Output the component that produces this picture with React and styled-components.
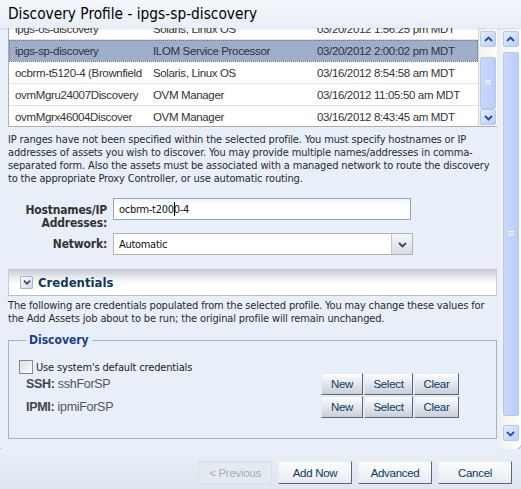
import React from "react";
import styled, { createGlobalStyle } from "styled-components";

const GlobalStyle = createGlobalStyle`
  html, body {
    margin: 0;
    padding: 0;
    background: #e9eff8;
  }
  #root {
    width: 521px;
    height: 489px;
    overflow: hidden;
  }
`;

const tahoma = `"DejaVu Sans Condensed", "Liberation Sans", sans-serif`;
const arial = `"Liberation Sans", Arial, sans-serif`;

const Page = styled.div`
  width: 521px;
  height: 489px;
  display: flex;
  flex-direction: column;
  background: #e9eff8;
  font-family: ${tahoma};
  color: #222;
`;

const TitleBar = styled.div`
  height: 28px;
  flex: none;
  display: flex;
  align-items: center;
  padding-left: 8px;
  font-size: 15.3px;
  color: #000;
  background: linear-gradient(#f4f7fb, #e8eef7);
  box-shadow: 0 1px 2px rgba(0, 0, 0, 0.12);
  position: relative;
  z-index: 1;
`;

const Panel = styled.div`
  height: 421px;
  flex: none;
  display: flex;
  background: #e9eff8;
  border-bottom-right-radius: 6px;
  border-bottom-left-radius: 3px;
  box-shadow: 0 2px 2px rgba(0, 0, 0, 0.25);
  overflow: hidden;
`;

const Scroller = styled.div`
  flex: 1;
  padding: 0 0 0 8px;
  overflow: hidden;
`;

const TableBox = styled.div`
  height: 98px;
  display: flex;
  border-left: 1px solid #a8b0bc;
  border-bottom: 1px solid #a8b0bc;
  background: #fff;
  margin-right: 3px;
`;

const Rows = styled.div`
  flex: 1;
  overflow: hidden;
  border-right: 1px solid #d8d8d8;
`;

const RowList = styled.div`
  margin-top: -10px;
`;

const Row = styled.div`
  height: 21px;
  display: grid;
  grid-template-columns: 138px 164px 1fr;
  align-items: center;
  font-family: ${arial};
  font-size: 11.5px;
  letter-spacing: -0.35px;
  color: #333;
  border-bottom: 1px solid #e2e2e2;
  background: ${(p) => (p.$selected ? "#9eadc9" : "#fff")};
  outline: ${(p) => (p.$selected ? "1px dotted #6a7890" : "none")};
  outline-offset: -1px;
  & > span {
    padding-left: 6px;
    white-space: nowrap;
    overflow: hidden;
  }
`;

const VScroll = styled.div`
  width: ${(p) => p.$w}px;
  flex: none;
  display: flex;
  flex-direction: column;
  align-items: center;
  padding: 3px 0 ${(p) => p.$pb}px;
  box-sizing: border-box;
  background: linear-gradient(90deg, #f3f2ea, #fdfdf9);
`;

const ScrollBtn = styled.div`
  width: 14px;
  height: 14px;
  flex: none;
  border: 1px solid #b4c8f0;
  border-radius: 2px;
  background: linear-gradient(135deg, #e6eeff, #b9cdf8);
  display: flex;
  align-items: center;
  justify-content: center;
`;

const Thumb = styled.div`
  width: 14px;
  flex: none;
  margin: ${(p) => p.$top}px 0 0;
  height: ${(p) => p.$h}px;
  border: 1px solid #b4c8f0;
  border-radius: 2px;
  background: linear-gradient(90deg, #c9d8fc, #bccdf7);
  display: flex;
  align-items: center;
  justify-content: center;
`;

const Spacer = styled.div`
  flex: 1;
`;

const Para = styled.p`
  margin: ${(p) => p.$m};
  font-size: 11px;
  letter-spacing: -0.15px;
  line-height: 13px;
  color: #2a2a2a;
`;

const FormRow = styled.div`
  display: flex;
  align-items: ${(p) => p.$align || "center"};
  margin-top: ${(p) => p.$mt}px;
`;

const Label = styled.label`
  width: 99px;
  padding-top: ${(p) => p.$pt || 0}px;
  text-align: right;
  font-weight: bold;
  font-size: 12px;
  letter-spacing: -0.2px;
  line-height: 13px;
  color: #333;
  margin-right: 6px;
`;

const TextInput = styled.div`
  width: 298px;
  height: 22px;
  box-sizing: border-box;
  border: 1px solid #8fa6c8;
  background: linear-gradient(#f0f3f7, #fff 6px);
  display: flex;
  align-items: center;
  padding-left: 5px;
  font-size: 11px;
  letter-spacing: -0.3px;
  color: #111;
`;

const Caret = styled.span`
  display: inline-block;
  width: 1px;
  height: 14px;
  background: #000;
  margin-right: -1px;
`;

const Select = styled.div`
  width: 300px;
  height: 22px;
  box-sizing: border-box;
  border: 1px solid #a9b4c2;
  background: #fff;
  display: flex;
  align-items: center;
  font-size: 11px;
  letter-spacing: -0.3px;
  color: #111;
  & > span {
    flex: 1;
    padding-left: 5px;
  }
`;

const SelectArrow = styled.div`
  width: 20px;
  height: 20px;
  border-left: 1px solid #c4c8ce;
  background: linear-gradient(#f6f6f6, #d9dbde);
  display: flex;
  align-items: center;
  justify-content: center;
`;

const SectionBar = styled.div`
  margin-top: 14px;
  height: 27px;
  box-sizing: border-box;
  margin-right: 3px;
  border-left: 1px solid #c8ccd2;
  border-bottom: 1px solid #b9bec6;
  border-right: 1px solid #c8ccd2;
  background: linear-gradient(#c3c8d0, #eceef1 9px, #fff 16px);
  display: flex;
  align-items: center;
  padding-left: 11px;
  gap: 5px;
  font-size: 13px;
  font-weight: bold;
  color: #0c3a5c;
`;

const Toggle = styled.div`
  width: 11px;
  height: 11px;
  border: 1px solid #aab4c4;
  border-radius: 1px;
  background: linear-gradient(135deg, #ffffff, #cfd9e8);
  display: flex;
  align-items: center;
  justify-content: center;
`;

const Fieldset = styled.fieldset`
  margin: 8px 3px 0 0;
  padding: 13px 0 0 10px;
  height: 106px;
  box-sizing: border-box;
  border: 1px solid #aab2c0;
  border-radius: 0;
  & > legend {
    padding: 0 3px;
    margin-left: 7px;
    font-size: 12px;
    font-weight: bold;
    color: #1b3f8d;
  }
`;

const CheckRow = styled.div`
  display: flex;
  align-items: center;
  gap: 3px;
  font-size: 11px;
  letter-spacing: -0.15px;
  color: #222;
`;

const Checkbox = styled.span`
  width: 12px;
  height: 12px;
  border: 1px solid #848b96;
  background: linear-gradient(135deg, #dedfe2, #fbfbfb);
`;

const CredGrid = styled.div`
  display: grid;
  grid-template-columns: 1fr auto;
  grid-auto-rows: 23px;
  align-items: center;
  margin-top: -2px;
  margin-right: 37px;
`;

const Cred = styled.div`
  padding-left: 7px;
  font-family: ${arial};
  font-size: 12.5px;
  letter-spacing: -0.3px;
  color: #555;
  & > b {
    color: #444;
  }
`;

const BtnGroup = styled.div`
  display: flex;
  gap: 1px;
`;

const SmallBtn = styled.div`
  width: ${(p) => p.$w}px;
  height: 22px;
  box-sizing: border-box;
  border: 1px solid #e6eaf0;
  border-right-color: #5c6676;
  border-bottom-color: #5c6676;
  background: linear-gradient(#fdfdfe, #c8d0dc);
  display: flex;
  align-items: center;
  justify-content: center;
  font-family: ${arial};
  font-size: 11.5px;
  letter-spacing: -0.3px;
  color: #0c3a5c;
`;

const Footer = styled.div`
  flex: 1;
  display: flex;
  justify-content: flex-end;
  align-items: flex-start;
  gap: 6px;
  padding: 12px 9px 0 0;
  background: linear-gradient(#e9eff8, #dfe6f0);
`;

const FootBtn = styled.div`
  width: 74px;
  height: 23px;
  box-sizing: border-box;
  display: flex;
  align-items: center;
  justify-content: center;
  font-family: ${arial};
  font-size: 11.5px;
  letter-spacing: -0.3px;
  color: ${(p) => (p.$disabled ? "#a4adb8" : "#0c3a5c")};
  border: 1px solid ${(p) => (p.$disabled ? "#d8dee6" : "#e8ecf2")};
  border-right-color: ${(p) => (p.$disabled ? "#d8dee6" : "#5c6676")};
  border-bottom-color: ${(p) => (p.$disabled ? "#d8dee6" : "#5c6676")};
  background: ${(p) =>
    p.$disabled ? "#e4eaf2" : "linear-gradient(#fefefe, #e6eaf0)"};
`;

const Chevron = ({ up, color = "#2a4a8a", size = 9 }) => (
  <svg width={size} height={size} viewBox="0 0 9 9">
    <path
      d={up ? "M1 6 L4.5 2.5 L8 6" : "M1 3 L4.5 6.5 L8 3"}
      fill="none"
      stroke={color}
      strokeWidth="1.8"
    />
  </svg>
);

const Grip = () => (
  <svg width="8" height="6" viewBox="0 0 8 6">
    <path d="M1 0.5h6M1 2.5h6M1 4.5h6" stroke="#eef3ff" strokeWidth="1" />
  </svg>
);

const rows = [
  ["ipgs-os-discovery", "Solaris, Linux OS", "03/20/2012 1:56:25 pm MDT"],
  ["ipgs-sp-discovery", "ILOM Service Processor", "03/20/2012 2:00:02 pm MDT"],
  ["ocbrm-t5120-4 (Brownfield", "Solaris, Linux OS", "03/16/2012 8:54:58 am MDT"],
  ["ovmMgru24007Discovery", "OVM Manager", "03/16/2012 11:05:50 am MDT"],
  ["ovmMgrx46004Discover", "OVM Manager", "03/16/2012 8:43:45 am MDT"],
];

export default function App() {
  return (
    <Page>
      <GlobalStyle />
      <TitleBar>Discovery Profile - ipgs-sp-discovery</TitleBar>
      <Panel>
        <Scroller>
          <TableBox>
            <Rows>
              <RowList>
                {rows.map((r, i) => (
                  <Row key={r[0]} $selected={i === 1}>
                    <span>{r[0]}</span>
                    <span>{r[1]}</span>
                    <span>{r[2]}</span>
                  </Row>
                ))}
              </RowList>
            </Rows>
            <VScroll $w={18} $pb={2}>
              <ScrollBtn>
                <Chevron up />
              </ScrollBtn>
              <Thumb $top={10} $h={50}>
                <Grip />
              </Thumb>
              <Spacer />
              <ScrollBtn>
                <Chevron />
              </ScrollBtn>
            </VScroll>
          </TableBox>

          <Para $m="6px 0 0 0">
            IP ranges have not been specified within the selected profile. You
            must specify hostnames or IP addresses of assets you wish to
            discover. You may provide multiple names/addresses in comma-separated
            form. Also the assets must be associated with a managed network to
            route the discovery to the appropriate Proxy Controller, or use
            automatic routing.
          </Para>

          <FormRow $mt={13} $align="flex-start">
            <Label $pt={6}>
              Hostnames/IP
              <br />
              Addresses:
            </Label>
            <TextInput>
              ocbrm-t200
              <Caret />
              0-4
            </TextInput>
          </FormRow>

          <FormRow $mt={3}>
            <Label>Network:</Label>
            <Select>
              <span>Automatic</span>
              <SelectArrow>
                <Chevron color="#24487e" />
              </SelectArrow>
            </Select>
          </FormRow>

          <SectionBar>
            <Toggle>
              <Chevron color="#2b4572" size={8} />
            </Toggle>
            Credentials
          </SectionBar>

          <Para $m="3px 0 0 0">
            The following are credentials populated from the selected profile.
            You may change these values for the Add Assets job about to be run;
            the original profile will remain unchanged.
          </Para>

          <Fieldset>
            <legend>Discovery</legend>
            <CheckRow>
              <Checkbox />
              Use system's default credentials
            </CheckRow>
            <CredGrid>
              <Cred>
                <b>SSH:</b> sshForSP
              </Cred>
              <BtnGroup>
                <SmallBtn $w={42}>New</SmallBtn>
                <SmallBtn $w={49}>Select</SmallBtn>
                <SmallBtn $w={45}>Clear</SmallBtn>
              </BtnGroup>
              <Cred>
                <b>IPMI:</b> ipmiForSP
              </Cred>
              <BtnGroup>
                <SmallBtn $w={42}>New</SmallBtn>
                <SmallBtn $w={49}>Select</SmallBtn>
                <SmallBtn $w={45}>Clear</SmallBtn>
              </BtnGroup>
            </CredGrid>
          </Fieldset>
        </Scroller>
        <VScroll $w={21} $pb={8}>
          <ScrollBtn>
            <Chevron up />
          </ScrollBtn>
          <Thumb $top={5} $h={362}>
            <Grip />
          </Thumb>
          <Spacer />
          <ScrollBtn>
            <Chevron />
          </ScrollBtn>
        </VScroll>
      </Panel>
      <Footer>
        <FootBtn $disabled>&lt; Previous</FootBtn>
        <FootBtn>Add Now</FootBtn>
        <FootBtn>Advanced</FootBtn>
        <FootBtn>Cancel</FootBtn>
      </Footer>
    </Page>
  );
}
